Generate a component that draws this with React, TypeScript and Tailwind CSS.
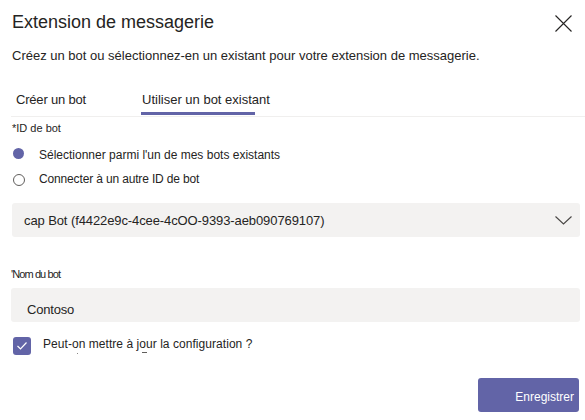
import React from "react";

export default function App() {
  return (
    <div
      className="w-[585px] h-[420px] bg-white text-[#252423] pl-[12px] pr-[5px] overflow-hidden"
      style={{ fontFamily: '"Liberation Sans", Arial, sans-serif' }}
    >
      {/* Header */}
      <div className="flex items-start justify-between pt-[10px]">
        <h1 className="text-[18px] leading-[24px] font-normal">Extension de messagerie</h1>
        <svg width="17" height="17" viewBox="0 0 17 17" className="mt-[5px] mr-[8px]">
          <path d="M0.5 0.5 L16.5 16.5 M16.5 0.5 L0.5 16.5" stroke="#252423" strokeWidth="1.1" fill="none" />
        </svg>
      </div>

      <p className="mt-[12px] text-[13px] leading-[20px]">
        Créez un bot ou sélectionnez-en un existant pour votre extension de messagerie.
      </p>

      {/* Tabs */}
      <div className="mt-[24px] -ml-[1px] -mr-[5px] flex border-b border-[#f0efee]">
        <div className="pl-[5px] w-[130px] flex flex-col">
          <span className="text-[13px] leading-[20px] tracking-[-0.2px]">Créer un bot</span>
          <span className="mt-[2px] h-[4px]" />
        </div>
        <div className="flex flex-col">
          <span className="text-[13px] leading-[20px] pl-[1px]">Utiliser un bot existant</span>
          <span className="mt-[2px] h-[3px] w-[114px] bg-[#6264a7]" />
          <span className="h-[1px]" />
        </div>
      </div>

      <div className="mt-[3px] text-[11px] leading-[16px]">*ID de bot</div>

      {/* Radios */}
      <div className="mt-[7px] flex flex-col">
        <div className="flex items-start h-[24px]">
          <span className="mt-[5px] ml-[1px] w-[11px] h-[11px] rounded-full bg-[#6264a7]" />
          <span className="ml-[15px] text-[12px] leading-[24px]">Sélectionner parmi l'un de mes bots existants</span>
        </div>
        <div className="flex items-start h-[24px]">
          <span className="mt-[7px] ml-[1px] w-[12px] h-[12px] rounded-full border border-[#605e5c]" />
          <span className="ml-[14px] text-[12px] leading-[24px] tracking-[-0.15px]">Connecter à un autre ID de bot</span>
        </div>
      </div>

      {/* Dropdown */}
      <div className="mt-[12px] h-[34px] rounded-[3px] bg-[#f3f2f1] flex items-center justify-between pl-[12px] pr-[8px] pt-[2px]">
        <span className="text-[13px] leading-[20px] tracking-[-0.1px]">cap Bot (f4422e9c-4cee-4cOO-9393-aeb090769107)</span>
        <svg width="17" height="9" viewBox="0 0 17 9" className="-mt-[2px]">
          <path d="M0.5 0.5 L8.5 8 L16.5 0.5" stroke="#484644" strokeWidth="1.1" fill="none" />
        </svg>
      </div>

      <div className="mt-[29px] -ml-[1px] text-[11px] leading-[16px] tracking-[-0.9px]">'Nom du bot</div>

      {/* Input */}
      <div className="mt-[6px] -ml-[1px] h-[34px] rounded-[3px] bg-[#f3f2f1] flex items-center pl-[16px] pt-[9px]">
        <span className="text-[13px] leading-[20px] tracking-[-0.2px]">Contoso</span>
      </div>

      {/* Checkbox */}
      <div className="mt-[15px] flex items-start">
        <span className="ml-[1px] w-[18px] h-[18px] rounded-[3px] bg-[#6264a7] flex items-center justify-center">
          <svg width="12" height="10" viewBox="0 0 12 10">
            <path d="M1.5 5 L4.5 8 L10.5 1.5" stroke="white" strokeWidth="1.2" fill="none" />
          </svg>
        </span>
        <span className="relative ml-[12px] -mt-[2px] text-[12px] leading-[18px] tracking-[0.05px]">
          Peut-on mettre à jour la configuration ?
          <span className="absolute left-[34px] top-[18px] w-[1px] h-[1px] bg-[#8a8886]" />
          <span className="absolute left-[99px] top-[17px] w-[5px] h-[1px] bg-[#605e5c]" />
        </span>
      </div>

      {/* Button */}
      <div className="mt-[23px] flex justify-end pr-[1px]">
        <button className="w-[101px] h-[34px] rounded-[3px] bg-[#6264a7] text-white text-[12px] leading-[20px] flex items-center justify-end pr-[5px] pt-[3px]">
          Enregistrer
        </button>
      </div>
    </div>
  );
}
